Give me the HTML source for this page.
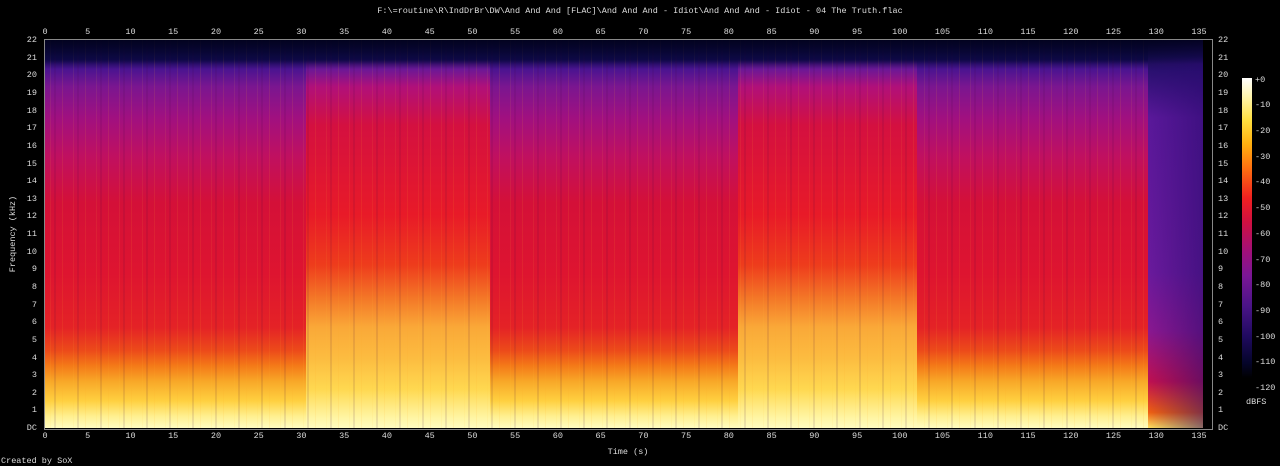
<!DOCTYPE html><html><head><style>
body{margin:0;background:#000;width:1280px;height:466px;overflow:hidden;position:relative;font-family:"Liberation Mono",monospace;font-size:8.5px;color:#ddd}
.a{position:absolute}
.xt,.xb{position:absolute;transform:translateX(-50%)}
.xt{top:27px}.xb{top:431px}
.yl{position:absolute;right:1243px;transform:translateY(-50%)}
.yr{position:absolute;left:1218px;transform:translateY(-50%)}
.cb{position:absolute;left:1255px;transform:translateY(-50%)}
.q{background:linear-gradient(to bottom,#05052e 0%,#10084a 5%,#4a1490 7.5%,#7a1690 12%,#a01080 20%,#c01060 30%,#d41038 42%,#de1430 60%,#e42226 74%,#ec4a1a 80%,#f47a18 84%,#f8a828 88%,#ffd040 93%,#fff090 97%,#fffcc0 100%)}
.l{background:linear-gradient(to bottom,#05052e 0%,#10084a 5%,#6a1896 7.5%,#b0107a 12%,#d41040 22%,#e81a28 45%,#ee3c1c 58%,#f47a28 67%,#faa838 74%,#fcbc40 82%,#ffd850 90%,#fff4a0 97%,#fffcc0 100%)}
.st{background:repeating-linear-gradient(90deg,rgba(255,200,60,0) 0 5px,rgba(255,200,60,.08) 5px 6px,rgba(0,0,0,0) 6px 9px,rgba(60,0,60,.1) 9px 11px,rgba(0,0,0,0) 11px 17px,rgba(255,170,40,.1) 17px 18px,rgba(0,0,0,0) 18px 23px)}
</style></head><body>
<div class="a" style="left:0;top:6px;width:1280px;text-align:center;">F:\=routine\R\IndDrBr\DW\And And And [FLAC]\And And And - Idiot\And And And - Idiot - 04 The Truth.flac</div>
<div class="a" style="left:45px;top:40px;width:1167px;height:388px;background:#000;overflow:hidden">
<div class="a q" style="left:0;top:0;width:261px;height:388px"></div>
<div class="a l" style="left:261px;top:0;width:184px;height:388px"></div>
<div class="a q" style="left:445px;top:0;width:248px;height:388px"></div>
<div class="a l" style="left:693px;top:0;width:179px;height:388px"></div>
<div class="a q" style="left:872px;top:0;width:231px;height:388px"></div>
<div class="a" style="left:1103px;top:0;width:55px;height:388px;background:linear-gradient(to bottom,#06062e 0%,#2a1070 8%,#5a189a 20%,#6a1a9c 60%,#8a1890 75%,#c01050 88%,#f06010 96%,#ffe060 100%)"></div>
<div class="a" style="left:1103px;top:0;width:55px;height:388px;background:linear-gradient(to right,rgba(0,0,0,0),rgba(40,10,110,.55))"></div>
<div class="a st" style="left:0;top:0;width:1103px;height:388px"></div>
<div class="a" style="left:0;top:0;width:1158px;height:24px;background:linear-gradient(to bottom,rgba(2,2,30,.9),rgba(10,8,60,.6) 70%,rgba(0,0,0,0))"></div>
</div>
<div class="a" style="left:44px;top:39px;width:1167px;height:389px;border:1px solid #888"></div>
<div class="a" style="left:1242px;top:78px;width:10px;height:300px;background:linear-gradient(to bottom,#fff 0%,#fff6b0 6%,#ffe040 14%,#ffb010 22%,#ff7010 30%,#f02020 40%,#d01040 48%,#a0107a 58%,#7a1696 66%,#4a1488 76%,#200a60 86%,#05052a 95%,#000 100%)"></div>
<div class="cb" style="top:80px">+0</div><div class="cb" style="top:105px">-10</div><div class="cb" style="top:131px">-20</div><div class="cb" style="top:157px">-30</div><div class="cb" style="top:182px">-40</div><div class="cb" style="top:208px">-50</div><div class="cb" style="top:234px">-60</div><div class="cb" style="top:260px">-70</div><div class="cb" style="top:285px">-80</div><div class="cb" style="top:311px">-90</div><div class="cb" style="top:337px">-100</div><div class="cb" style="top:362px">-110</div><div class="cb" style="top:388px">-120</div>
<div class="a" style="left:1246px;top:397px">dBFS</div>
<div class="xt" style="left:45px">0</div><div class="xt" style="left:87.7px">5</div><div class="xt" style="left:130.5px">10</div><div class="xt" style="left:173.2px">15</div><div class="xt" style="left:216px">20</div><div class="xt" style="left:258.7px">25</div><div class="xt" style="left:301.4px">30</div><div class="xt" style="left:344.2px">35</div><div class="xt" style="left:386.9px">40</div><div class="xt" style="left:429.7px">45</div><div class="xt" style="left:472.4px">50</div><div class="xt" style="left:515.1px">55</div><div class="xt" style="left:557.9px">60</div><div class="xt" style="left:600.6px">65</div><div class="xt" style="left:643.4px">70</div><div class="xt" style="left:686.1px">75</div><div class="xt" style="left:728.8px">80</div><div class="xt" style="left:771.6px">85</div><div class="xt" style="left:814.3px">90</div><div class="xt" style="left:857.1px">95</div><div class="xt" style="left:899.8px">100</div><div class="xt" style="left:942.5px">105</div><div class="xt" style="left:985.3px">110</div><div class="xt" style="left:1028px">115</div><div class="xt" style="left:1070.8px">120</div><div class="xt" style="left:1113.5px">125</div><div class="xt" style="left:1156.2px">130</div><div class="xt" style="left:1199px">135</div>
<div class="xb" style="left:45px">0</div><div class="xb" style="left:87.7px">5</div><div class="xb" style="left:130.5px">10</div><div class="xb" style="left:173.2px">15</div><div class="xb" style="left:216px">20</div><div class="xb" style="left:258.7px">25</div><div class="xb" style="left:301.4px">30</div><div class="xb" style="left:344.2px">35</div><div class="xb" style="left:386.9px">40</div><div class="xb" style="left:429.7px">45</div><div class="xb" style="left:472.4px">50</div><div class="xb" style="left:515.1px">55</div><div class="xb" style="left:557.9px">60</div><div class="xb" style="left:600.6px">65</div><div class="xb" style="left:643.4px">70</div><div class="xb" style="left:686.1px">75</div><div class="xb" style="left:728.8px">80</div><div class="xb" style="left:771.6px">85</div><div class="xb" style="left:814.3px">90</div><div class="xb" style="left:857.1px">95</div><div class="xb" style="left:899.8px">100</div><div class="xb" style="left:942.5px">105</div><div class="xb" style="left:985.3px">110</div><div class="xb" style="left:1028px">115</div><div class="xb" style="left:1070.8px">120</div><div class="xb" style="left:1113.5px">125</div><div class="xb" style="left:1156.2px">130</div><div class="xb" style="left:1199px">135</div>
<div class="yl" style="top:428px">DC</div><div class="yl" style="top:410.4px">1</div><div class="yl" style="top:392.7px">2</div><div class="yl" style="top:375.1px">3</div><div class="yl" style="top:357.5px">4</div><div class="yl" style="top:339.8px">5</div><div class="yl" style="top:322.2px">6</div><div class="yl" style="top:304.5px">7</div><div class="yl" style="top:286.9px">8</div><div class="yl" style="top:269.3px">9</div><div class="yl" style="top:251.6px">10</div><div class="yl" style="top:234px">11</div><div class="yl" style="top:216.4px">12</div><div class="yl" style="top:198.7px">13</div><div class="yl" style="top:181.1px">14</div><div class="yl" style="top:163.5px">15</div><div class="yl" style="top:145.8px">16</div><div class="yl" style="top:128.2px">17</div><div class="yl" style="top:110.5px">18</div><div class="yl" style="top:92.9px">19</div><div class="yl" style="top:75.3px">20</div><div class="yl" style="top:57.6px">21</div><div class="yl" style="top:40px">22</div>
<div class="yr" style="top:428px">DC</div><div class="yr" style="top:410.4px">1</div><div class="yr" style="top:392.7px">2</div><div class="yr" style="top:375.1px">3</div><div class="yr" style="top:357.5px">4</div><div class="yr" style="top:339.8px">5</div><div class="yr" style="top:322.2px">6</div><div class="yr" style="top:304.5px">7</div><div class="yr" style="top:286.9px">8</div><div class="yr" style="top:269.3px">9</div><div class="yr" style="top:251.6px">10</div><div class="yr" style="top:234px">11</div><div class="yr" style="top:216.4px">12</div><div class="yr" style="top:198.7px">13</div><div class="yr" style="top:181.1px">14</div><div class="yr" style="top:163.5px">15</div><div class="yr" style="top:145.8px">16</div><div class="yr" style="top:128.2px">17</div><div class="yr" style="top:110.5px">18</div><div class="yr" style="top:92.9px">19</div><div class="yr" style="top:75.3px">20</div><div class="yr" style="top:57.6px">21</div><div class="yr" style="top:40px">22</div>
<div class="a" style="top:234px;transform:translate(-50%,-50%) rotate(-90deg);left:13px;white-space:nowrap">Frequency (kHz)</div>
<div class="a" style="left:628px;top:447px;transform:translateX(-50%)">Time (s)</div>
<div class="a" style="left:1px;top:456px">Created by SoX</div>
</body></html>
